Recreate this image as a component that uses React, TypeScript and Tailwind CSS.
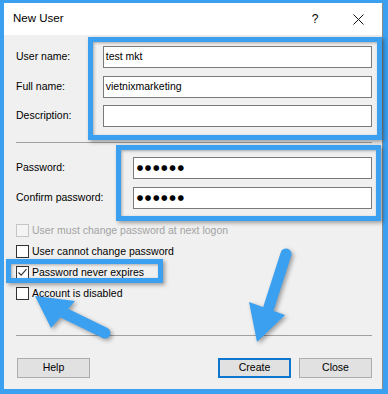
import React from "react";

const font = { fontFamily: '"Liberation Sans", Arial, sans-serif' };

function TextBox({ value, width, password }: { value?: string; width: string; password?: boolean }) {
  return (
    <div className={`${width} h-[22px] bg-white border border-[#7a7a7a] flex items-center pl-[2px] text-[10.5px] text-black`}>
      {password ? (
        <span className="text-[7.5px] tracking-[1.6px] leading-none ml-[1px]" style={{ fontFamily: '"DejaVu Sans", sans-serif' }}>●●●●●●</span>
      ) : (
        value
      )}
    </div>
  );
}

function Check({ label, checked, disabled }: { label: string; checked?: boolean; disabled?: boolean }) {
  return (
    <div className="h-[21px] flex items-center">
      <div
        className={`w-[13px] h-[13px] border flex items-center justify-center ${
          disabled ? "border-[#c6c6c6] bg-[#f4f4f4]" : "border-[#333333] bg-white"
        }`}
      >
        {checked && (
          <svg width="11" height="11" viewBox="0 0 11 11">
            <path d="M1.5 5.5 L4.2 8.2 L9.5 2.2" fill="none" stroke="#333" strokeWidth="1.1" />
          </svg>
        )}
      </div>
      <span className={`ml-[3px] text-[10.5px] ${disabled ? "text-[#a3a3a3]" : "text-black"}`}>{label}</span>
    </div>
  );
}

function Btn({ label, primary }: { label: string; primary?: boolean }) {
  return (
    <div
      className={`w-[73px] h-[20px] flex items-center justify-center bg-[#e1e1e1] text-[10.5px] text-black ${
        primary ? "border-2 border-[#0f76cf]" : "border border-[#adadad]"
      }`}
    >
      {label}
    </div>
  );
}

export default function App() {
  return (
    <div className="relative w-[388px] h-[394px] bg-[#3ba0f0] pt-[3px] pl-[4px] pr-[5px] pb-[5px]" style={font}>
      <div className="w-full h-full flex flex-col border-r border-[#8a8a8a]">
        {/* Title bar */}
        <div className="h-[32px] bg-white flex items-center pl-[9px] shrink-0">
          <span className="text-[11.5px] text-black">New User</span>
          <div className="ml-auto flex items-center mr-[18px]">
            <span className="text-[12px] text-black w-[10px] text-center">?</span>
            <svg className="ml-[33px]" width="11" height="11" viewBox="0 0 11 11">
              <path d="M0.5 0.5 L10.5 10.5 M10.5 0.5 L0.5 10.5" stroke="#111" strokeWidth="1" />
            </svg>
          </div>
        </div>
        {/* Body */}
        <div className="flex-1 bg-[#f0f0f0] pl-[12px] pr-[10px] pt-[11px] flex flex-col">
          <div className="flex items-center">
            <span className="w-[87px] text-[10.5px] text-black">User name:</span>
            <TextBox value="test mkt" width="w-[270px]" />
          </div>
          <div className="flex items-center mt-[8px]">
            <span className="w-[87px] text-[10.5px] text-black">Full name:</span>
            <TextBox value="vietnixmarketing" width="w-[270px]" />
          </div>
          <div className="flex items-center mt-[7px]">
            <span className="w-[87px] text-[10.5px] text-black">Description:</span>
            <TextBox value="" width="w-[270px]" />
          </div>
          <div className="mt-[15px] h-px bg-[#a0a0a0]" />
          <div className="flex items-center mt-[14px]">
            <span className="w-[117px] text-[10.5px] text-black">Password:</span>
            <TextBox password width="w-[240px]" />
          </div>
          <div className="flex items-center mt-[8px]">
            <span className="w-[117px] text-[10.5px] text-black">Confirm password:</span>
            <TextBox password width="w-[240px]" />
          </div>
          <div className="mt-[11px] flex flex-col">
            <Check label="User must change password at next logon" disabled />
            <Check label="User cannot change password" />
            <Check label="Password never expires" checked />
            <Check label="Account is disabled" />
          </div>
          <div className="mt-[31px] h-px bg-[#a0a0a0]" />
          <div className="mt-[22px] flex items-center">
            <div className="ml-[1px]">
              <Btn label="Help" />
            </div>
            <div className="ml-auto flex gap-[8px]">
              <Btn label="Create" primary />
              <Btn label="Close" />
            </div>
          </div>
        </div>
      </div>

      {/* Highlight boxes */}
      <div className="absolute left-[88px] top-[37px] w-[294px] h-[103px] border-[5px] border-[#3ba0f0] shadow-[2px_2px_4px_rgba(0,0,0,0.35),inset_1px_1px_3px_rgba(0,0,0,0.3)]" />
      <div className="absolute left-[116px] top-[145px] w-[265px] h-[76px] border-[5px] border-[#3ba0f0] shadow-[2px_2px_4px_rgba(0,0,0,0.35),inset_1px_1px_3px_rgba(0,0,0,0.3)]" />
      <div className="absolute left-[6px] top-[259px] w-[157px] h-[24px] border-[5px] border-[#3ba0f0] shadow-[2px_2px_4px_rgba(0,0,0,0.35),inset_1px_1px_3px_rgba(0,0,0,0.3)]" />

      {/* Arrows */}
      <svg
        className="absolute left-0 top-0 pointer-events-none"
        width="388"
        height="394"
        viewBox="0 0 388 394"
        style={{ filter: "drop-shadow(2px 2px 2px rgba(0,0,0,0.35))" }}
      >
        <line x1="286" y1="254" x2="268" y2="310" stroke="#3ba0f0" strokeWidth="11" strokeLinecap="round" />
        <polygon points="249,302 285,315 257,342" fill="#3ba0f0" />
        <line x1="105" y1="333" x2="62" y2="312" stroke="#3ba0f0" strokeWidth="11" strokeLinecap="round" />
        <polygon points="35,296 75,301 51,328" fill="#3ba0f0" />
      </svg>
    </div>
  );
}
